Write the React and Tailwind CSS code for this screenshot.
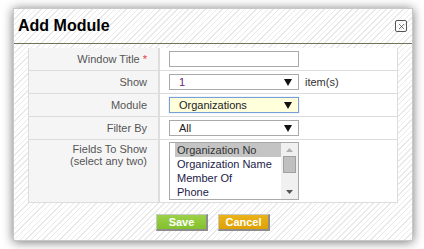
import { X } from 'lucide-react'

const hatch =
  'bg-[repeating-linear-gradient(135deg,#ffffff_0px,#ffffff_3px,#e9e9e9_3px,#e9e9e9_4px)]'

function Arrow() {
  return (
    <svg width="8" height="7" viewBox="0 0 8 7" className="shrink-0" aria-hidden="true">
      <polygon points="0,0 8,0 4,7" fill="#111" />
    </svg>
  )
}

function FakeSelect({ value, focused = false, valueClass = 'text-[#222]' }) {
  return (
    <div
      className={
        focused
          ? 'flex h-[16px] w-[130px] items-center justify-between border border-[#7a9fd6] bg-[#ffffdc] pl-[9px] pr-[6px] shadow-[0_0_1px_#9ec0ee]'
          : 'flex h-[16px] w-[130px] items-center justify-between border border-[#a9a9a9] bg-white pl-[9px] pr-[6px]'
      }
    >
      <span className={'text-[11px] leading-none ' + valueClass}>{value}</span>
      <Arrow />
    </div>
  )
}

function Row({ label, required, children, last = false }) {
  return (
    <div className={last ? 'flex h-[63px] border-b border-[#dcdcdc]' : 'flex h-[23px] border-b border-[#dcdcdc]'}>
      <div
        className={
          last
            ? 'w-[131px] shrink-0 border-r-2 border-[#dedede] bg-[#f5f5f5] pr-[11px] pt-[3px] text-right text-[11px] leading-[12px] text-[#555]'
            : 'flex w-[131px] shrink-0 items-center justify-end border-r-2 border-[#dedede] bg-[#f5f5f5] pr-[11px] text-[11px] text-[#555]'
        }
      >
        {label}
        {required && <span className="ml-[3px] text-[#e0403a]">*</span>}
      </div>
      <div className={last ? 'flex-1 bg-white pl-[9px] pt-[2px]' : 'flex flex-1 items-center bg-white pl-[9px]'}>
        {children}
      </div>
    </div>
  )
}

const fields = ['Organization No', 'Organization Name', 'Member Of', 'Phone']

export default function App() {
  return (
    <div className="h-[249px] w-[424px] bg-white pl-[13px] pt-[8px] font-['Liberation_Sans',Arial,sans-serif]">
      <div className={'h-[233px] w-[400px] border border-[#c8c8c8] shadow-[0_1px_10px_rgba(0,0,0,0.55)] ' + hatch}>
        <div className="flex h-[35px] items-center justify-between border-b border-[#727259] pl-[4px] pr-[5px]">
          <h1 className="text-[16px] font-bold text-black">Add Module</h1>
          <button className="flex h-[12px] w-[12px] items-center justify-center rounded-[2px] border border-[#555] text-[#555]" aria-label="Close">
            <X className="h-[9px] w-[9px]" strokeWidth={2} />
          </button>
        </div>

        <div className="mx-[14px] mt-[4px] border-l border-r border-[#dcdcdc]">
          <Row label="Window Title" required>
            <input className="h-[16px] w-[130px] border border-[#a9a9a9] bg-white outline-none" />
          </Row>
          <Row label="Show">
            <FakeSelect value="1" valueClass="text-[#6a1b7a]" />
            <span className="ml-[6px] text-[11px] text-[#333]">item(s)</span>
          </Row>
          <Row label="Module">
            <FakeSelect value="Organizations" focused />
          </Row>
          <Row label="Filter By">
            <FakeSelect value="All" />
          </Row>
          <Row label={<>Fields To Show<br />(select any two)</>} last>
            <div className="flex h-[58px] w-[130px] border border-[#a9a9a9] bg-white pl-[5px]">
              <div className="flex-1 text-[11px] leading-[14px]">
                {fields.map((f, i) => (
                  <div key={f} className={i === 0 ? 'bg-[#c4c4c4] pl-[2px] text-[#333]' : 'pl-[2px] text-[#1c1c4a]'}>
                    {f}
                  </div>
                ))}
              </div>
              <div className="flex w-[17px] flex-col items-center bg-[#f0f0f0]">
                <svg width="7" height="4" viewBox="0 0 7 4" className="mt-[5px]" aria-hidden="true">
                  <polygon points="0,4 7,4 3.5,0" fill="#b0b0b0" />
                </svg>
                <div className="mt-[4px] h-[17px] w-[13px] border border-[#a0a0a0] bg-[#c0c0c0]" />
                <svg width="7" height="4" viewBox="0 0 7 4" className="mt-auto mb-[5px]" aria-hidden="true">
                  <polygon points="0,0 7,0 3.5,4" fill="#555" />
                </svg>
              </div>
            </div>
          </Row>
        </div>

        <div className="mt-[11px] flex justify-center gap-[10px]">
          <button className="h-[17px] w-[52px] border border-b-2 border-r-2 border-[#8d8d8d] border-l-[#c8c8c8] border-t-[#c8c8c8] bg-[linear-gradient(#9bd14a,#84c02c)] text-[11px] font-bold leading-none text-white">
            Save
          </button>
          <button className="h-[17px] w-[52px] border border-b-2 border-r-2 border-[#8d8d8d] border-l-[#c8c8c8] border-t-[#c8c8c8] bg-[linear-gradient(#eab31a,#dfa100)] text-[11px] font-bold leading-none text-white">
            Cancel
          </button>
        </div>
      </div>
    </div>
  )
}
